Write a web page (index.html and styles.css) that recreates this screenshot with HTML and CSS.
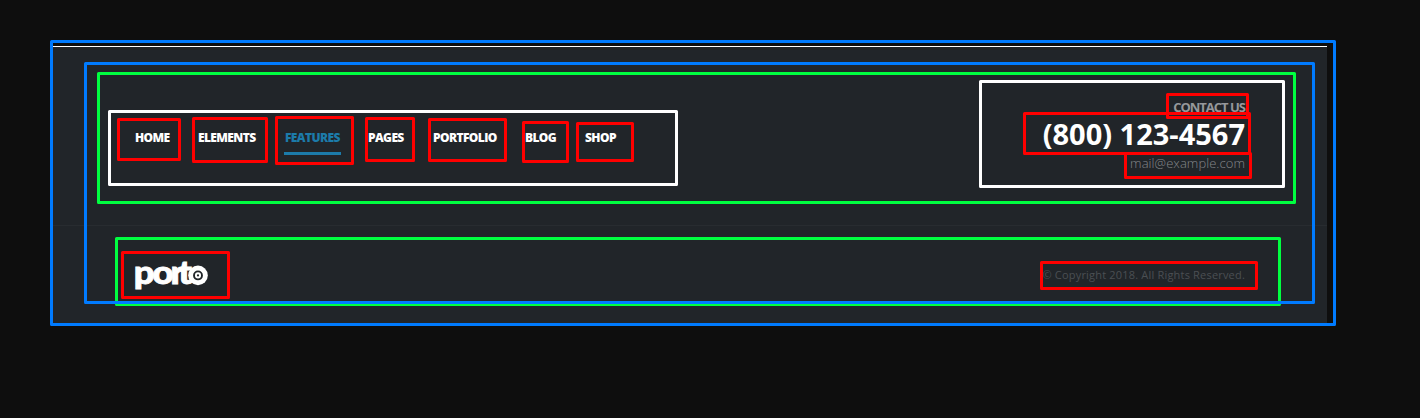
FILE: index.html
```html
<!DOCTYPE html>
<html lang="en">
<head>
<meta charset="utf-8">
<title>Porto footer</title>
<link rel="stylesheet" href="styles.css">
</head>
<body>
<footer class="footer">
  <div class="footer-main">
    <nav class="nav">
      <a class="nav-link home">HOME</a>
      <a class="nav-link elements">ELEMENTS</a>
      <a class="nav-link features active">FEATURES</a>
      <a class="nav-link pages">PAGES</a>
      <a class="nav-link portfolio">PORTFOLIO</a>
      <a class="nav-link blog">BLOG</a>
      <a class="nav-link shop">SHOP</a>
    </nav>
    <address class="contact">
      <span class="contact-title">CONTACT US</span>
      <strong class="phone">(800) 123-4567</strong>
      <span class="mail">mail@example.com</span>
    </address>
  </div>
  <div class="footer-bottom">
    <svg class="logo" width="76" height="40" viewBox="0 0 76 40" role="img" aria-label="porto">
      <text class="logo-text" transform="scale(1.1 1)" x="-0.2 16.8 33.2 40.3" y="27.3">port</text>
      <circle cx="64" cy="18.4" r="9.8" fill="#fff"/>
      <circle cx="64" cy="18.4" r="4" fill="#fff" stroke="#212529" stroke-width="1.9"/>
      <circle cx="64" cy="18.4" r="1.1" fill="#212529"/>
    </svg>
    <p class="copyright">© Copyright 2018. All Rights Reserved.</p>
  </div>
</footer>

<svg class="outlines" width="1420" height="418" viewBox="0 0 1420 418" aria-hidden="true">
  <g class="outline green">
    <rect x="98.5" y="73.5" width="1196" height="129"/>
    <rect x="116.5" y="238.5" width="1163" height="66"/>
  </g>
  <g class="outline blue">
    <rect x="51.5" y="41.5" width="1283" height="283"/>
    <rect x="85.5" y="63.5" width="1228" height="239"/>
  </g>
  <g class="outline white">
    <rect x="109.5" y="111.5" width="567" height="73"/>
    <rect x="980.5" y="81.5" width="303" height="105"/>
  </g>
  <g class="outline red">
    <rect x="118.5" y="119.5" width="61" height="40"/>
    <rect x="193.5" y="118.5" width="73" height="43"/>
    <rect x="276.5" y="117.5" width="76" height="46"/>
    <rect x="366.5" y="118.5" width="47" height="42"/>
    <rect x="429.5" y="119.5" width="76" height="41"/>
    <rect x="523.5" y="122.5" width="44" height="39"/>
    <rect x="577.5" y="123.5" width="55" height="37"/>
    <rect x="1167.5" y="94.5" width="80" height="23"/>
    <rect x="1024.5" y="113.5" width="225" height="40"/>
    <rect x="1125.5" y="153.5" width="125" height="24"/>
    <rect x="122.5" y="252.5" width="106" height="45"/>
    <rect x="1041.5" y="262.5" width="215" height="26"/>
  </g>
</svg>
</body>
</html>
```
FILE: styles.css
```css
* { box-sizing: border-box; }

body {
  margin: 0;
  height: 418px;
  padding: 46px 93px 0 50px;
  overflow: hidden;
  background: #0e0e0e;
  font-family: "Open Sans", "Noto Sans", sans-serif;
}

.footer {
  height: 278px;
  border-top: 1px solid #fff;
  background: #212529;
}

.footer-main {
  display: flex;
  justify-content: space-between;
  height: 179px;
  padding: 50px 82px 0 85px;
  border-bottom: 1px solid #282c30;
}

.nav {
  display: flex;
  align-items: flex-start;
  padding-top: 32px;
}

.nav-link {
  height: 26px;
  color: #fff;
  font-size: 12px;
  font-weight: 800;
  line-height: 18px;
  letter-spacing: -0.6px;
  white-space: nowrap;
}

.home { width: 63px; }
.elements { width: 86px; }
.features { width: 57px; margin-right: 27px; }
.pages { width: 65px; }
.portfolio { width: 92px; }
.blog { width: 60px; }

.active {
  color: #1c7baa;
  border-bottom: 3px solid #1c7baa;
  text-indent: 1px;
}

.contact {
  display: flex;
  flex-direction: column;
  align-items: flex-end;
  font-style: normal;
  white-space: nowrap;
}

.contact-title {
  color: #96989b;
  font-size: 13px;
  font-weight: 700;
  line-height: 20px;
  letter-spacing: -1px;
}

.phone {
  color: #fff;
  font-size: 29px;
  font-weight: 700;
  line-height: 34px;
}

.mail {
  color: #85888b;
  font-size: 13px;
  font-weight: 300;
  line-height: 24px;
  letter-spacing: 0.06px;
}

.footer-bottom {
  display: flex;
  justify-content: space-between;
  align-items: flex-start;
  padding: 31px 82px 0 84px;
}

.logo { overflow: visible; }

.logo-text {
  fill: #fff;
  stroke: #fff;
  stroke-width: 0.9px;
  font-family: Lato, sans-serif;
  font-size: 33px;
  font-weight: 900;
}

.copyright {
  margin: 9px 0 0;
  color: #4b4f53;
  font-size: 11px;
  line-height: 18px;
  letter-spacing: 0.19px;
}

.outlines {
  position: absolute;
  top: 0;
  left: 0;
}

.outline {
  fill: none;
  stroke-width: 3px;
  stroke-linejoin: round;
}

.blue { stroke: #007bff; }
.green { stroke: #00ff40; }
.white { stroke: #fff; }
.red { stroke: #f00; }
```
